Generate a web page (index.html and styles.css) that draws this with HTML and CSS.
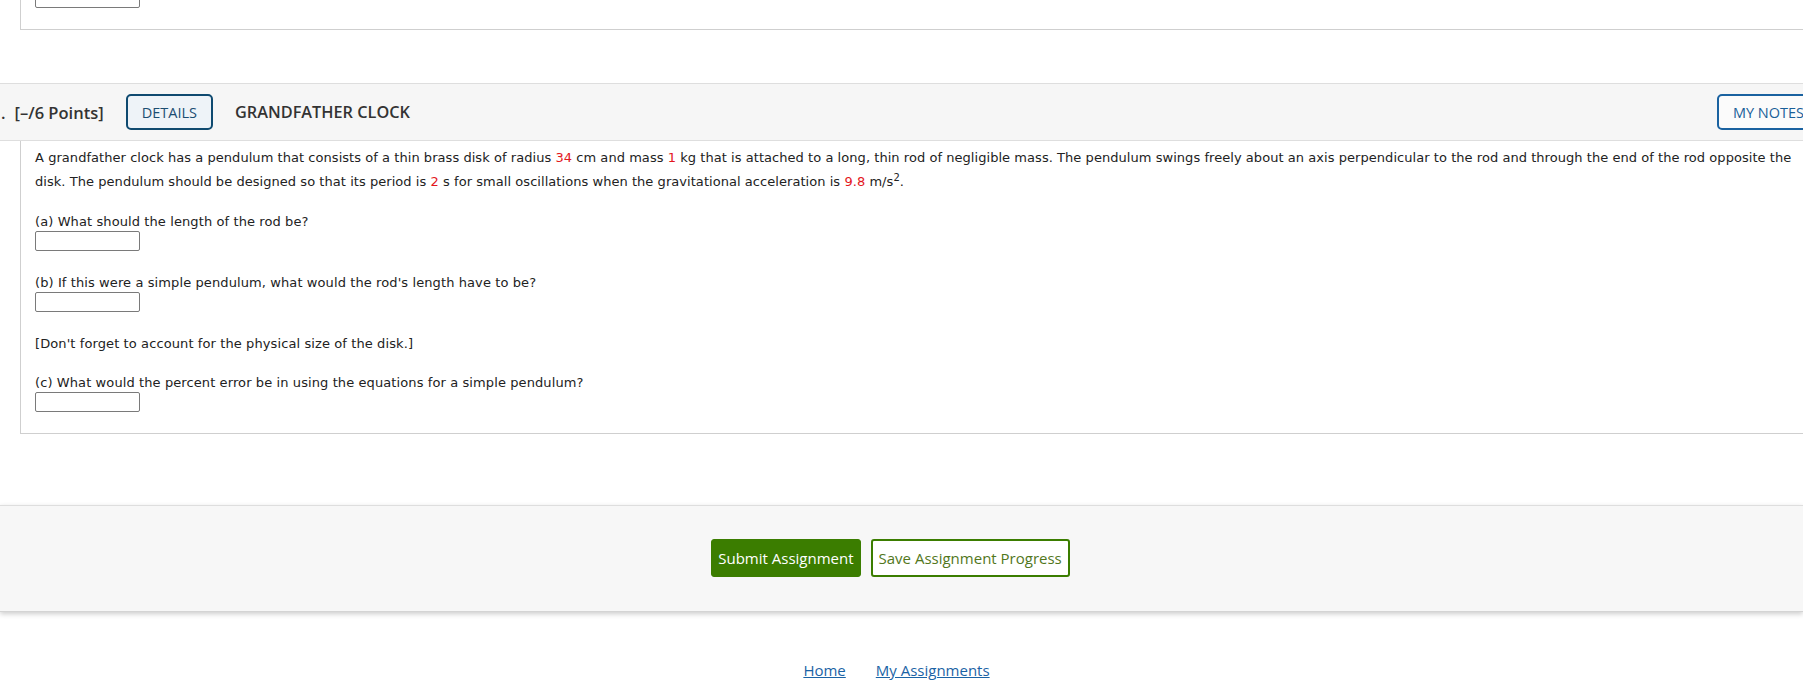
FILE: index.html
```html
<!DOCTYPE html>
<html lang="en">
<head>
<meta charset="utf-8">
<title>Grandfather Clock</title>
<link rel="stylesheet" href="styles.css">
</head>
<body>
<div class="page">
  <div class="prev-q">
    <input class="answer-box" type="text" aria-label="previous answer">
  </div>

  <section class="question">
    <header class="q-head">
      <span class="q-num">.</span>
      <span class="q-points">[–/6 Points]</span>
      <button class="btn-details" type="button">DETAILS</button>
      <span class="q-title">GRANDFATHER CLOCK</span>
      <button class="btn-notes" type="button">MY NOTES</button>
    </header>
    <div class="q-body">
      <p class="q-intro">A grandfather clock has a pendulum that consists of a thin brass disk of radius <span class="val">34</span> cm and mass <span class="val">1</span> kg that is attached to a long, thin rod of negligible mass. The pendulum swings freely about an axis perpendicular to the rod and through the end of the rod opposite the disk. The pendulum should be designed so that its period is <span class="val">2</span> s for small oscillations when the gravitational acceleration is <span class="val">9.8</span> m/s<sup>2</sup>.</p>

      <div class="q-part first">
        <div class="q-label">(a) What should the length of the rod be?</div>
        <input class="answer-box" type="text" aria-label="answer a">
      </div>

      <div class="q-part">
        <div class="q-label">(b) If this were a simple pendulum, what would the rod's length have to be?</div>
        <input class="answer-box" type="text" aria-label="answer b">
      </div>

      <div class="q-part">
        <div class="q-label">[Don't forget to account for the physical size of the disk.]</div>
      </div>

      <div class="q-part">
        <div class="q-label">(c) What would the percent error be in using the equations for a simple pendulum?</div>
        <input class="answer-box" type="text" aria-label="answer c">
      </div>
    </div>
  </section>

  <div class="submit-bar">
    <button class="btn-submit" type="button">Submit Assignment</button>
    <button class="btn-save" type="button">Save Assignment Progress</button>
  </div>

  <nav class="footer-links">
    <a href="#">Home</a>
    <a href="#">My Assignments</a>
  </nav>
</div>
</body>
</html>
```

FILE: styles.css
```css
* { box-sizing: border-box; }

html, body {
  margin: 0;
  padding: 0;
}

body {
  width: 1803px;
  height: 688px;
  overflow: hidden;
  background: #fff;
  font-family: "Open Sans", "Liberation Sans", sans-serif;
  color: #333;
}

.page {
  display: flex;
  flex-direction: column;
}

.answer-box {
  display: block;
  width: 105px;
  height: 20px;
  margin: 0;
  padding: 0 4px;
  border: 1px solid #7a7a7a;
  border-radius: 2px;
  background: #fff;
  font: 13px "DejaVu Sans", sans-serif;
}

.prev-q {
  margin: -12px -20px 0 20px;
  padding: 0 14px 21px;
  border-left: 1px solid #cfcfcf;
  border-bottom: 1px solid #cfcfcf;
}

/* question header */
.q-head {
  margin: 53px -30px 0 0;
  padding: 10px 13px 10px 1px;
  display: flex;
  align-items: center;
  background: #f6f6f6;
  border-top: 1px solid #dedede;
  border-bottom: 1px solid #dedede;
}

.q-num,
.q-points,
.q-title {
  font-size: 16.5px;
  font-weight: 600;
  color: #333;
}

.q-title { font-size: 16.3px; }

.q-num { margin-right: 9px; }
.q-points { margin-right: 22px; }
.q-title { margin-left: 22px; }

.btn-details,
.btn-notes {
  height: 36px;
  padding: 0 14px;
  border-radius: 5px;
  font-family: "Open Sans", "Liberation Sans", sans-serif;
  font-size: 14.5px;
  font-weight: 500;
  cursor: pointer;
}

.btn-details {
  border: 2px solid #0f4a70;
  background: #eef3f8;
  color: #1b4d72;
}

.btn-notes {
  margin-left: auto;
  border: 2px solid #1a62a0;
  background: #fbfbfb;
  color: #1a5f99;
}

/* question body */
.q-body {
  margin: 0 -20px 0 20px;
  padding: 5px 14px 21px;
  border-left: 1px solid #cfcfcf;
  border-bottom: 1px solid #cfcfcf;
  font-family: "DejaVu Sans", Verdana, sans-serif;
  font-size: 13px;
  letter-spacing: 0.1px;
  color: #222;
}

.q-intro {
  margin: 0;
  line-height: 24px;
  letter-spacing: 0.05px;
}

.q-intro sup {
  font-size: 10px;
  line-height: 0;
}

.val { color: #e3161c; }

.q-part { margin-top: 24px; }
.q-part.first { margin-top: 20px; }

.q-label {
  line-height: 15px;
  margin-bottom: 2px;
}

/* submit bar */
.submit-bar {
  margin-top: 71px;
  padding: 33px 22px 34px 0;
  display: flex;
  justify-content: center;
  gap: 10px;
  background: #f7f7f7;
  border-top: 1px solid #dedede;
  border-bottom: 1px solid #d4d4d4;
  box-shadow: 0 2px 5px rgba(0, 0, 0, 0.2);
}

.btn-submit,
.btn-save {
  height: 38px;
  padding: 0 6px;
  border-radius: 3px;
  font-family: "Open Sans", "Liberation Sans", sans-serif;
  font-size: 15px;
  cursor: pointer;
}

.btn-submit {
  border: 1px solid #3b7d00;
  background: #3b7d00;
  color: #fff;
}

.btn-save {
  border: 2px solid #3b7d00;
  background: #fff;
  color: #52771c;
}

/* footer links */
.footer-links {
  margin-top: 48px;
  padding-right: 10px;
  display: flex;
  justify-content: center;
  gap: 30px;
  font-size: 15px;
}

.footer-links a {
  color: #1b63a5;
  text-decoration: underline;
}
```
